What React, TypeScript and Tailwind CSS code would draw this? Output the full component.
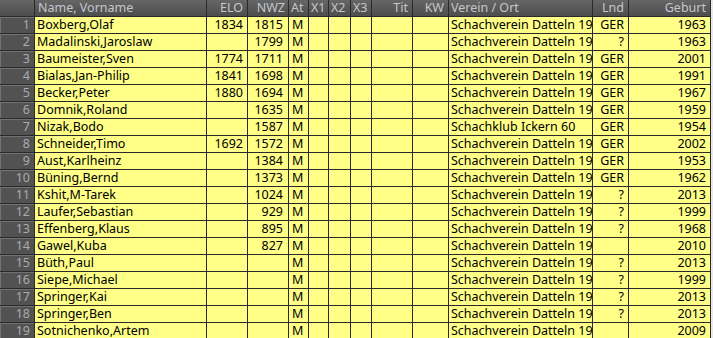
import React from 'react';

type Player = {
  name: string;
  elo: string;
  nwz: string;
  club: string;
  lnd: string;
  born: string;
};

const DATTELN = 'Schachverein Datteln 1920';

const players: Player[] = [
  { name: 'Boxberg,Olaf', elo: '1834', nwz: '1815', club: DATTELN, lnd: 'GER', born: '1963' },
  { name: 'Madalinski,Jaroslaw', elo: '', nwz: '1799', club: DATTELN, lnd: '?', born: '1963' },
  { name: 'Baumeister,Sven', elo: '1774', nwz: '1711', club: DATTELN, lnd: 'GER', born: '2001' },
  { name: 'Bialas,Jan-Philip', elo: '1841', nwz: '1698', club: DATTELN, lnd: 'GER', born: '1991' },
  { name: 'Becker,Peter', elo: '1880', nwz: '1694', club: DATTELN, lnd: 'GER', born: '1967' },
  { name: 'Domnik,Roland', elo: '', nwz: '1635', club: DATTELN, lnd: 'GER', born: '1959' },
  { name: 'Nizak,Bodo', elo: '', nwz: '1587', club: 'Schachklub Ickern 60', lnd: 'GER', born: '1954' },
  { name: 'Schneider,Timo', elo: '1692', nwz: '1572', club: DATTELN, lnd: 'GER', born: '2002' },
  { name: 'Aust,Karlheinz', elo: '', nwz: '1384', club: DATTELN, lnd: 'GER', born: '1953' },
  { name: 'Büning,Bernd', elo: '', nwz: '1373', club: DATTELN, lnd: 'GER', born: '1962' },
  { name: 'Kshit,M-Tarek', elo: '', nwz: '1024', club: DATTELN, lnd: '?', born: '2013' },
  { name: 'Laufer,Sebastian', elo: '', nwz: '929', club: DATTELN, lnd: '?', born: '1999' },
  { name: 'Effenberg,Klaus', elo: '', nwz: '895', club: DATTELN, lnd: '?', born: '1968' },
  { name: 'Gawel,Kuba', elo: '', nwz: '827', club: DATTELN, lnd: '', born: '2010' },
  { name: 'Büth,Paul', elo: '', nwz: '', club: DATTELN, lnd: '?', born: '2013' },
  { name: 'Siepe,Michael', elo: '', nwz: '', club: DATTELN, lnd: '?', born: '1999' },
  { name: 'Springer,Kai', elo: '', nwz: '', club: DATTELN, lnd: '?', born: '2013' },
  { name: 'Springer,Ben', elo: '', nwz: '', club: DATTELN, lnd: '?', born: '2013' },
  { name: 'Sotnichenko,Artem', elo: '', nwz: '', club: DATTELN, lnd: '', born: '2009' },
];

// fixed column widths, border included
const cols =
  'grid grid-cols-[35px_172px_41px_41px_20px_20px_22px_21px_41px_36px_144px_36px_82px]';

const cell = 'h-[17px] border-r border-b border-[#2a2a2a] overflow-hidden whitespace-nowrap leading-[16px]';
const head = `${cell} bg-gradient-to-b from-[#666666] to-[#4d4d4d] text-[#c4c8cc]`;
const data = `${cell} bg-[#ffff88] text-black`;

export default function App() {
  return (
    <div
      className="w-[713px] h-[338px] overflow-hidden bg-[#e8e8e8] text-[12.5px]"
      style={{ fontFamily: '"Noto Sans", "Open Sans", sans-serif' }}
    >
      <div className={`${cols} w-[711px]`}>
        <div className={head} />
        <div className={`${head} pl-[3px]`}>Name, Vorname</div>
        <div className={`${head} text-right pr-[4px]`}>ELO</div>
        <div className={`${head} text-right pr-[3px]`}>NWZ</div>
        <div className={`${head} pl-[2px]`}>At</div>
        <div className={`${head} pl-[2px]`}>X1</div>
        <div className={`${head} pl-[2px]`}>X2</div>
        <div className={`${head} pl-[2px]`}>X3</div>
        <div className={`${head} text-right pr-[4px]`}>Tit</div>
        <div className={`${head} text-right pr-[4px]`}>KW</div>
        <div className={`${head} pl-[2px]`}>Verein / Ort</div>
        <div className={`${head} text-right pr-[4px]`}>Lnd</div>
        <div className={`${head} text-right pr-[4px]`}>Geburt</div>

        {players.map((p, i) => (
          <React.Fragment key={i}>
            <div className="h-[17px] border-r border-b border-[#2a2a2a] bg-[#525252] shadow-[inset_1px_1px_0_#727272] text-right pr-[4px] text-[#a8acb0] leading-[16px]">
              {i + 1}
            </div>
            <div className={`${data} pl-[2px]`}>{p.name}</div>
            <div className={`${data} text-right pr-[4px]`}>{p.elo}</div>
            <div className={`${data} text-right pr-[5px]`}>{p.nwz}</div>
            <div className={`${data} pl-[3px]`}>M</div>
            <div className={data} />
            <div className={data} />
            <div className={data} />
            <div className={data} />
            <div className={data} />
            <div className={`${data} pl-[2px]`}>{p.club}</div>
            <div className={`${data} text-right pr-[4px]`}>{p.lnd}</div>
            <div className={`${data} text-right pr-[4px]`}>{p.born}</div>
          </React.Fragment>
        ))}
      </div>
    </div>
  );
}
